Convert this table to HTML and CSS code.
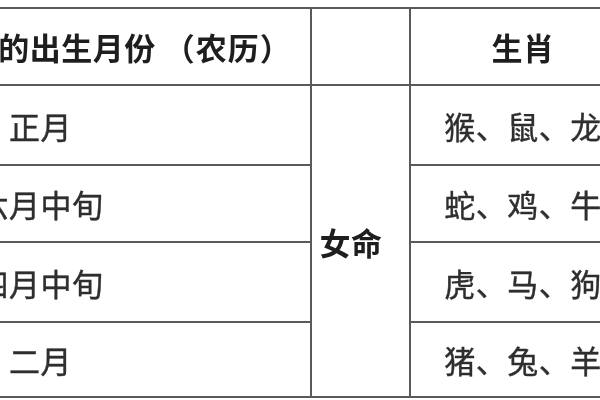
FILE: index.html
```html
<!DOCTYPE html>
<html lang="zh-CN">
<head>
<meta charset="utf-8">
<title>生肖配对表</title>
<link rel="stylesheet" href="styles.css">
</head>
<body>
<div class="sheet">
  <div class="cell head head-month">男命的出生月份<span class="lunar">（农历）</span></div>
  <div class="cell head-blank"></div>
  <div class="cell head head-zodiac">生肖</div>

  <div class="cell month">正月</div>
  <div class="cell female">女命</div>
  <div class="cell zodiac">猴、鼠、龙</div>

  <div class="cell month">六月中旬</div>
  <div class="cell zodiac">蛇、鸡、牛</div>

  <div class="cell month">四月中旬</div>
  <div class="cell zodiac">虎、马、狗</div>

  <div class="cell month">二月</div>
  <div class="cell zodiac">猪、兔、羊</div>
</div>
</body>
</html>
```

FILE: styles.css
```css
html, body {
  margin: 0;
  padding: 0;
  background: #ffffff;
}

body {
  width: 600px;
  height: 400px;
  overflow: hidden;
  font-family: "Noto Sans CJK SC", "Noto Sans", sans-serif;
  color: #2a2a2a;
}

.sheet {
  display: grid;
  grid-template-columns: 539px 97px 224px;
  grid-template-rows: 75px 78px 75px 78px 73px;
  gap: 2px;
  padding: 2px;
  width: max-content;
  margin-top: 7px;
  margin-left: -231px;
  background: #5a5a5a;
  filter: blur(0.35px);
}

.cell {
  background: #ffffff;
  display: flex;
  align-items: center;
  justify-content: center;
  font-size: 31px;
  letter-spacing: 0.5px;
  line-height: 1;
  white-space: nowrap;
  text-spacing-trim: space-all;
}

.head {
  font-weight: 700;
  color: #1e1e1e;
}

.head-month {
  padding-left: 146px;
}

.lunar {
  margin-left: 8px;
  letter-spacing: 1px;
}

.female {
  grid-column: 2;
  grid-row: 2 / span 4;
  font-weight: 700;
  color: #1e1e1e;
  padding-right: 19px;
}

.month,
.zodiac {
  font-weight: 400;
  color: #2e2e2e;
  -webkit-text-stroke: 0.4px #2e2e2e;
}
```
